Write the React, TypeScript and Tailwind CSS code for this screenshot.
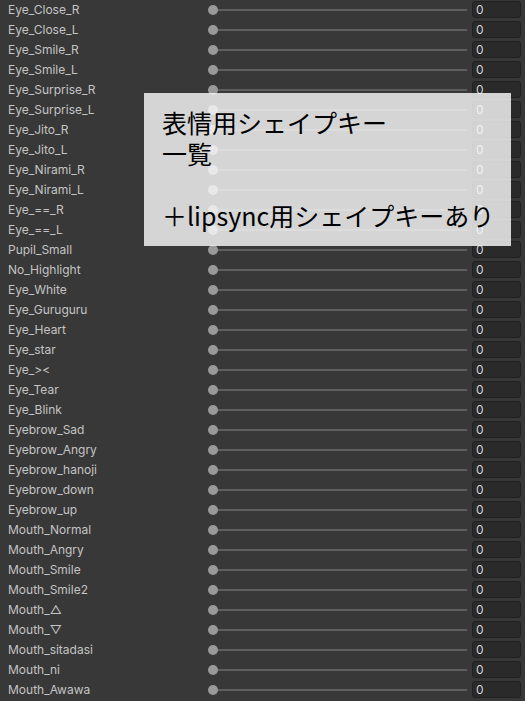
const keys = [
  "Eye_Close_R",
  "Eye_Close_L",
  "Eye_Smile_R",
  "Eye_Smile_L",
  "Eye_Surprise_R",
  "Eye_Surprise_L",
  "Eye_Jito_R",
  "Eye_Jito_L",
  "Eye_Nirami_R",
  "Eye_Nirami_L",
  "Eye_==_R",
  "Eye_==_L",
  "Pupil_Small",
  "No_Highlight",
  "Eye_White",
  "Eye_Guruguru",
  "Eye_Heart",
  "Eye_star",
  "Eye_><",
  "Eye_Tear",
  "Eye_Blink",
  "Eyebrow_Sad",
  "Eyebrow_Angry",
  "Eyebrow_hanoji",
  "Eyebrow_down",
  "Eyebrow_up",
  "Mouth_Normal",
  "Mouth_Angry",
  "Mouth_Smile",
  "Mouth_Smile2",
  "Mouth_△",
  "Mouth_▽",
  "Mouth_sitadasi",
  "Mouth_ni",
  "Mouth_Awawa",
];

function ShapeRow({ name }: { name: string }) {
  return (
    <div className="flex h-5 items-center">
      {/* Label */}
      <div className="w-[208px] shrink-0 pl-2 text-[12px] text-[#c4c4c4]">{name}</div>

      {/* Slider */}
      <div className="relative flex h-5 w-[259px] shrink-0 items-center">
        <div className="h-[2px] w-full bg-[#5e5e5e]" />
        <div className="absolute left-0 top-[5px] h-[10px] w-[10px] rounded-full bg-[#999999]" />
      </div>

      {/* Value field */}
      <div className="ml-[5px] flex h-[17px] w-[49px] items-center self-start mt-px rounded-[3px] border border-[#212121] bg-[#2a2a2a] pl-[3px] text-[12px] text-[#d2d2d2]">
        0
      </div>
    </div>
  );
}

export default function App() {
  return (
    <div
      className="relative h-[701px] w-[525px] overflow-hidden bg-[#383838]"
      style={{ fontFamily: "Inter, 'Noto Sans CJK JP', sans-serif" }}
    >
      <div className="flex flex-col">
        {keys.map((k) => (
          <ShapeRow key={k} name={k} />
        ))}
      </div>

      {/* Annotation overlay */}
      <div
        className="absolute left-[144px] top-[93px] h-[153px] w-[367px] bg-[rgba(250,250,250,0.81)] pl-[18px] pt-[14px] text-[25px] leading-[31px] text-black"
        style={{ fontFamily: "'Noto Sans CJK JP', sans-serif" }}
      >
        <div>表情用シェイプキー</div>
        <div>一覧</div>
        <div>&nbsp;</div>
        <div>＋lipsync用シェイプキーあり</div>
      </div>
    </div>
  );
}
